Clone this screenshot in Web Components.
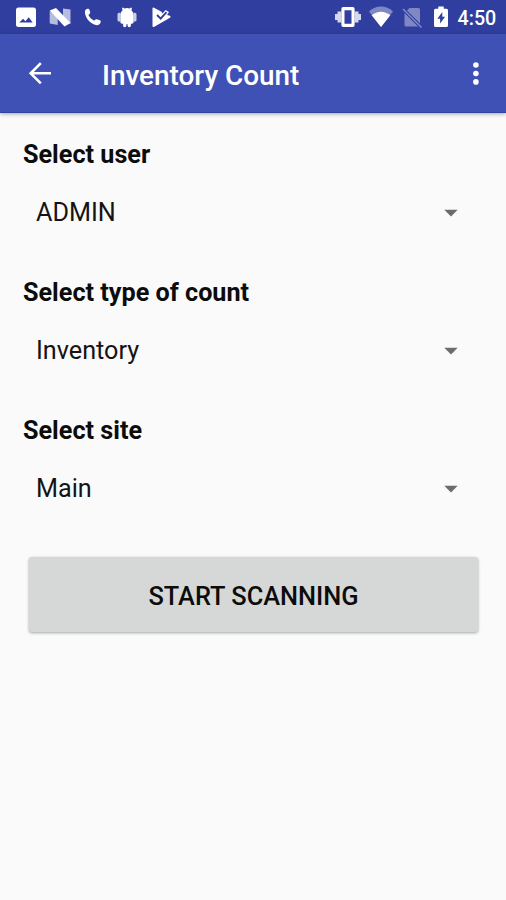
<!DOCTYPE html>
<html lang="en">
<head>
<meta charset="utf-8">
<title>Inventory Count</title>
<style>
html,body{margin:0;height:100%;background:#fafafa;font-family:Roboto,"Liberation Sans",sans-serif}
</style>
</head>
<body>
<inventory-screen></inventory-screen>
<script>
const define = (name, html, init) => {
  const t = document.createElement('template');
  t.innerHTML = html;
  customElements.define(name, class extends HTMLElement {
    constructor() {
      super();
      this.attachShadow({mode: 'open'}).append(t.content.cloneNode(true));
    }
    connectedCallback() { if (init) init(this, this.shadowRoot); }
  });
};

const icons = {
  image: '<path fill-rule="evenodd" d="M4.500 2.500h15a2.500 2.500 0 0 1 2.500 2.500v14.500a2.500 2.500 0 0 1-2.500 2.500h-15a2.500 2.500 0 0 1-2.500-2.500V5a2.500 2.500 0 0 1 2.500-2.500zM5.300 17.500h13.400l-4-5.200-3.300 3.900-2.300-2.400z"/>',
  nougat: '<path opacity=".65" d="M1.700 6l8 6v8l-8-1.500zM15 3.500l7.500 1V19L15 13z"/><path d="M1.700 5.500L8 3l14.500 15-6 3.400z"/>',
  phone: '<path d="M4.200 5.500c.5-1.200 2.300-2.300 3.600-1.500.9.600 1.600 3.500 1.300 4.200-.3.700-1.600 1.100-1.500 1.900.3 1.600 3.600 5 5.300 5.400.8.200 1.300-1.100 2.100-1.300.8-.2 3.800.7 4.500 1.500.9 1.300-.5 3.400-1.800 4.100-2.500 1.200-6.700-.8-9.400-3.500-2.700-2.700-5.200-7.800-4.100-10.800z"/>',
  android: '<path d="M7 3l1-.4 1.200 1a7.500 7.500 0 0 1 5.600 0l1.200-1 1 .4-.6 2.300A7 7 0 0 1 18.600 9v8c0 1-.8 1.700-1.700 1.700h-1v1.700c0 2.300-3.300 2.300-3.300 0v-1.200h-1.200v1.200c0 2.300-3.300 2.300-3.300 0v-1.700h-1c-1 0-1.700-.7-1.700-1.700V9a7 7 0 0 1 2.200-3.700z"/><path opacity=".75" d="M5.400 7.800v8.700H4q-1.500 0-1.500-1.500V9.300q0-1.500 1.500-1.500zM18.600 7.800v8.700H20q1.500 0 1.500-1.500V9.300q0-1.500-1.500-1.500z"/>',
  play: '<path d="M3.500 3.500q0-1.500 1.500-.7l7.500 4 1 1.700 3-3.500 3.500 2-2 3 3 .7q1.300 1 0 2.100L5.300 21.800q-1.800.8-1.800-1z"/><path fill="none" stroke="#303f9f" stroke-width="1.900" d="M8 10l3.700 3.700 5.800-6.500"/>',
  vibrate: '<path fill-rule="evenodd" d="M7.200 2h9.600A1.800 1.800 0 0 1 18.600 3.800v16.400a1.800 1.800 0 0 1-1.800 1.800H7.200a1.800 1.800 0 0 1-1.800-1.800V3.800A1.800 1.800 0 0 1 7.200 2zM8.500 5.300v13.400h7V5.300z"/><path opacity=".8" d="M1.500 6.500h3.900v11H1.500zM18.600 6.500h3.900v11h-3.900zM-1 9h2.500v6H-1zM22.500 9H25v6h-2.500z"/>',
  wifi: '<path opacity=".38" d="M0 6.500C7-.1 17-.1 24 6.500L12 22z"/><path d="M2.700 10.200c5.700-4.700 12.900-4.700 18.600 0L12 22z"/>',
  nosim: '<g opacity=".38"><path d="M9.500 3H18.500q1.500 0 1.500 1.500v14L7 5.500zM4.500 8l13.500 13.500H6q-1.500 0-1.500-1.500z"/><path fill="none" stroke="#fff" stroke-width="1.600" d="M3 4l18.500 18.500"/></g>',
  battery: '<path fill-rule="evenodd" d="M9.300 1.500h5.400v2.300h2.800q1.500 0 1.500 1.500v15.200q0 1.500-1.500 1.500h-11Q5 22 5 20.500V5.300q0-1.500 1.500-1.500h2.800zM13.300 7l-5 6.700h2.800v4.800l5-6.700h-2.800z"/>'
};
define('status-icon', `<style>
:host{display:flex;flex:none;width:33.75px;justify-content:center}
svg{display:block;overflow:visible;fill:#fff;width:24px;height:24px}
</style><svg viewBox="0 0 24 24"></svg>`, (el, r) => {
  r.querySelector('svg').innerHTML = icons[el.getAttribute('name')];
});
define('status-bar', `<style>
:host{display:flex;height:34px;box-sizing:border-box;padding:0 11px 0 9px;align-items:center;background:#303f9f;color:#fff}
.gap{flex:1}
.system{display:flex;align-items:center}
.v{width:33px}.w{width:33px}.s{width:29px}.b{width:28px}
time{font-size:19.700px;font-weight:500;line-height:24px;padding-top:3px;margin-left:3px;width:37.500px;white-space:nowrap}
</style>
<status-icon name="image"></status-icon><status-icon name="nougat"></status-icon><status-icon name="phone"></status-icon><status-icon name="android"></status-icon><status-icon name="play"></status-icon>
<span class="gap"></span>
<div class="system"><status-icon class="v" name="vibrate"></status-icon><status-icon class="w" name="wifi"></status-icon><status-icon class="s" name="nosim"></status-icon><status-icon class="b" name="battery"></status-icon><time>4:50</time></div>`);
define('app-bar', `<style>
:host{display:flex;height:79px;box-sizing:border-box;align-items:center;padding:0 18px 0 27px;background:#3f51b5;border-bottom:1px solid #3144a5;color:#fff;box-shadow:0 1px 4px rgba(0,0,0,.35)}
svg{display:block;flex:none}
h1{margin:6px 0 0 50px;flex:1;font-size:27.900px;line-height:34px;font-weight:500;white-space:nowrap}
</style>
<svg width="25" height="24" viewBox="0 0 25 24" fill="none" stroke="#fff" stroke-width="2.600"><path d="M24 12.300H4M13.800 2.200L3.700 12.300 13.800 22.400"/></svg>
<h1><slot></slot></h1>
<svg width="24" height="24" viewBox="0 0 24 24" fill="#fff"><circle cx="11.900" cy="4" r="2.800"/><circle cx="11.900" cy="12.500" r="2.800"/><circle cx="11.900" cy="20.900" r="2.800"/></svg>`);
define('select-field', `<style>
:host{display:block;height:137.800px}
label{display:block;font-size:25.200px;font-weight:700;line-height:30px;color:#0c0c0c;white-space:nowrap}
.value{display:flex;justify-content:space-between;align-items:center;margin-top:28px;padding:0 20.500px 0 13px;font-size:25.200px;line-height:30px;color:#141414}
svg{display:block}
</style><label></label><div class="value"><slot></slot><svg width="14" height="8" viewBox="0 0 14 8"><path fill="#6c6c6c" d="M.3 .8h13.400L7 7.500z"/></svg></div>`, (el, r) => {
  r.querySelector('label').textContent = el.getAttribute('label');
});
define('action-button', `<style>
:host{display:block}
button{display:block;width:100%;height:75px;border:0;border-radius:3px;padding:3px 0 0;background:#d6d8d7;color:#0c0c0c;font:500 25.400px/30px Roboto,"Liberation Sans",sans-serif;box-shadow:0 1px 3px rgba(0,0,0,.35)}
</style><button><slot></slot></button>`);
define('inventory-screen', `<style>
:host{display:flex;flex-direction:column;height:100vh;background:#fafafa;overflow:hidden}
main{padding:27px 28px 0 23px}
action-button{margin:4px 0 0 6px}
</style>
<status-bar></status-bar><app-bar>Inventory Count</app-bar>
<main><select-field label="Select user">ADMIN</select-field><select-field label="Select type of count">Inventory</select-field><select-field label="Select site">Main</select-field><action-button>START SCANNING</action-button></main>`);
</script>
</body>
</html>
